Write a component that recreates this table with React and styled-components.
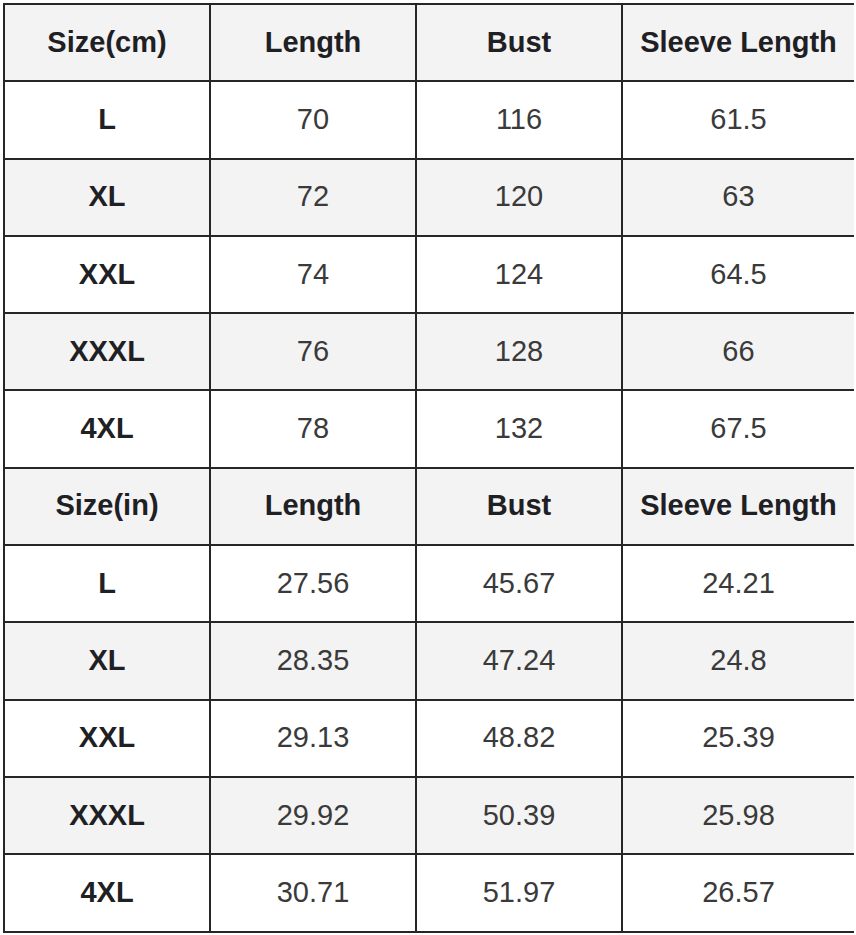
import styled, { createGlobalStyle } from 'styled-components'

const sections = [
    {
        unit: 'Size(cm)',
        rows: [
            ['L', '70', '116', '61.5'],
            ['XL', '72', '120', '63'],
            ['XXL', '74', '124', '64.5'],
            ['XXXL', '76', '128', '66'],
            ['4XL', '78', '132', '67.5'],
        ],
    },
    {
        unit: 'Size(in)',
        rows: [
            ['L', '27.56', '45.67', '24.21'],
            ['XL', '28.35', '47.24', '24.8'],
            ['XXL', '29.13', '48.82', '25.39'],
            ['XXXL', '29.92', '50.39', '25.98'],
            ['4XL', '30.71', '51.97', '26.57'],
        ],
    },
]

export default function App() {
    return (
        <>
            <Global />
            <Page>
                <Chart>
                    {sections.map(section => (
                        <Section key={section.unit}>
                            <Cell $head $shade>{section.unit}</Cell>
                            <Cell $head $shade>Length</Cell>
                            <Cell $head $shade>Bust</Cell>
                            <Cell $head $shade>Sleeve Length</Cell>
                            {section.rows.map((row, i) =>
                                row.map((value, j) => (
                                    <Cell key={i + '-' + j} $head={j === 0} $shade={i % 2 === 1}>
                                        {value}
                                    </Cell>
                                ))
                            )}
                        </Section>
                    ))}
                </Chart>
            </Page>
        </>
    )
}

const Global = createGlobalStyle`
    body {
        margin: 0;
        background: #fff;
        font-family: "Liberation Sans", Arial, sans-serif;
    }
`
const Page = styled.div`
    padding: 3px 0 0 3px;
`
const Chart = styled.div`
    width: 851px;
    background-color: #262626;
    padding: 2px;
    box-sizing: border-box;
    display: flex;
    flex-direction: column;
    gap: 2px;
`
const Section = styled.div`
    display: grid;
    grid-template-columns: 204px 204px 204px 231px;
    grid-auto-rows: 75.3px;
    gap: 2px;
`
const Cell = styled.div`
    background-color: ${props => props.$shade ? '#f3f3f3' : '#fff'};
    display: flex;
    align-items: center;
    justify-content: center;
    padding-bottom: 1px;
    font-size: 29px;
    font-weight: ${props => props.$head ? 700 : 400};
    color: ${props => props.$head ? '#1e2024' : '#3a3a3a'};
`
